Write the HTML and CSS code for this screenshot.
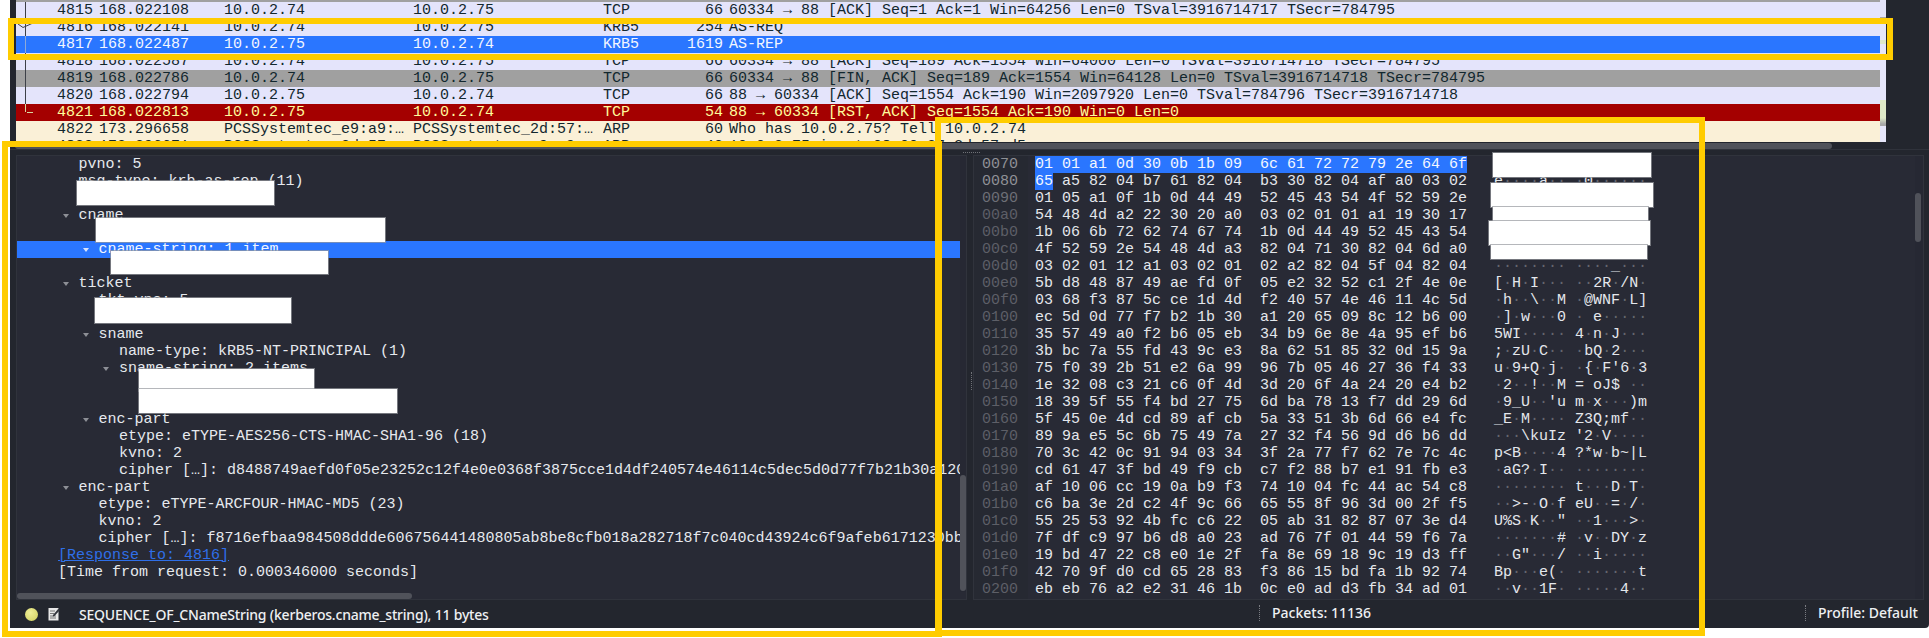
FILE: index.html
```html
<!DOCTYPE html>
<html lang="en">
<head>
<meta charset="utf-8">
<title>Wireshark</title>
<link rel="stylesheet" href="styles.css">
</head>
<body>
<div class="window">
  <div class="top">
    <div class="list">
      <div class="pkt tcp frame"><span class="no">4815</span><span class="time">168.022108</span><span class="addr">10.0.2.74</span><span class="addr2">10.0.2.75</span><span class="proto">TCP</span><span class="len">66</span><span class="info">60334 → 88 [ACK] Seq=1 Ack=1 Win=64256 Len=0 TSval=3916714717 TSecr=784795</span></div>
      <div class="pkt tcp frame"><svg class="check" width="16" height="6" viewBox="0 0 16 6"><path d="M0 1 L5 4.5 L15 0" fill="none" stroke="#3d4048" stroke-width="1"/></svg><span class="no">4816</span><span class="time">168.022141</span><span class="addr">10.0.2.74</span><span class="addr2">10.0.2.75</span><span class="proto">KRB5</span><span class="len">254</span><span class="info">AS-REQ</span></div>
      <div class="pkt sel frame"><span class="no">4817</span><span class="time">168.022487</span><span class="addr">10.0.2.75</span><span class="addr2">10.0.2.74</span><span class="proto">KRB5</span><span class="len">1619</span><span class="info">AS-REP</span></div>
      <div class="pkt tcp frame"><span class="no">4818</span><span class="time">168.022587</span><span class="addr">10.0.2.74</span><span class="addr2">10.0.2.75</span><span class="proto">TCP</span><span class="len">66</span><span class="info">60334 → 88 [ACK] Seq=189 Ack=1554 Win=64000 Len=0 TSval=3916714718 TSecr=784795</span></div>
      <div class="pkt fin frame"><span class="no">4819</span><span class="time">168.022786</span><span class="addr">10.0.2.74</span><span class="addr2">10.0.2.75</span><span class="proto">TCP</span><span class="len">66</span><span class="info">60334 → 88 [FIN, ACK] Seq=189 Ack=1554 Win=64128 Len=0 TSval=3916714718 TSecr=784795</span></div>
      <div class="pkt tcp frame"><span class="no">4820</span><span class="time">168.022794</span><span class="addr">10.0.2.75</span><span class="addr2">10.0.2.74</span><span class="proto">TCP</span><span class="len">66</span><span class="info">88 → 60334 [ACK] Seq=1554 Ack=190 Win=2097920 Len=0 TSval=784796 TSecr=3916714718</span></div>
      <div class="pkt rst frame-end"><span class="no">4821</span><span class="time">168.022813</span><span class="addr">10.0.2.75</span><span class="addr2">10.0.2.74</span><span class="proto">TCP</span><span class="len">54</span><span class="info">88 → 60334 [RST, ACK] Seq=1554 Ack=190 Win=0 Len=0</span></div>
      <div class="pkt arp"><span class="no">4822</span><span class="time">173.296658</span><span class="addr">PCSSystemtec_e9:a9:…</span><span class="addr2">PCSSystemtec_2d:57:…</span><span class="proto">ARP</span><span class="len">60</span><span class="info">Who has 10.0.2.75? Tell 10.0.2.74</span></div>
      <div class="pkt arp"><span class="no">4823</span><span class="time">173.296671</span><span class="addr">PCSSystemtec_2d:57:…</span><span class="addr2">PCSSystemtec_e9:a9:…</span><span class="proto">ARP</span><span class="len">42</span><span class="info">10.0.2.75 is at 08:00:27:2d:57:d5</span></div>
    </div>
    <div class="minimap"></div>
  </div>
  <div class="hscroll"><div class="hthumb"></div></div>
  <div class="panes">
    <div class="tree">
      <div class="treebody">
        <div class="t l1">pvno: 5</div>
        <div class="t l1">msg-type: krb-as-rep (11)</div>
        <div class="t l1">crealm: DIRECTORY.THM</div>
        <div class="t l1 open">cname</div>
        <div class="t l2">name-type: kRB5-NT-PRINCIPAL (1)</div>
        <div class="t l2 open cur">cname-string: 1 item</div>
        <div class="t l3">CNameString: larry.doe</div>
        <div class="t l1 open">ticket</div>
        <div class="t l2">tkt-vno: 5</div>
        <div class="t l2">realm: DIRECTORY.THM</div>
        <div class="t l2 open">sname</div>
        <div class="t l3">name-type: kRB5-NT-PRINCIPAL (1)</div>
        <div class="t l3 open">sname-string: 2 items</div>
        <div class="t l4">SNameString: krbtgt</div>
        <div class="t l4">SNameString: DIRECTORY.THM</div>
        <div class="t l2 open">enc-part</div>
        <div class="t l3">etype: eTYPE-AES256-CTS-HMAC-SHA1-96 (18)</div>
        <div class="t l3">kvno: 2</div>
        <div class="t l3">cipher […]: d8488749aefd0f05e23252c12f4e0e0368f3875cce1d4df240574e46114c5dec5d0d77f7b21b30a120650</div>
        <div class="t l1 open">enc-part</div>
        <div class="t l2">etype: eTYPE-ARCFOUR-HMAC-MD5 (23)</div>
        <div class="t l2">kvno: 2</div>
        <div class="t l2">cipher […]: f8716efbaa984508ddde606756441480805ab8be8cfb018a282718f7c040cd43924c6f9afeb6171230bb7f2</div>
        <div class="t l0"><span class="link">[Response to: 4816]</span></div>
        <div class="t l0">[Time from request: 0.000346000 seconds]</div>
      </div>
      <div class="vscroll tree-v"><div class="vthumb"></div></div>
      <div class="tree-h"><div class="tree-hthumb"></div></div>
    </div>
    <div class="hex">
      <div class="hr"><span class="off hi">0070</span><span class="by"><b>01 01 a1 0d 30 0b 1b 09  6c 61 72 72 79 2e 64 6f</b></span><span class="as"><i>····</i>0<i>···</i> larry.do</span></div>
      <div class="hr"><span class="off hi">0080</span><span class="by"><b>65</b> a5 82 04 b7 61 82 04  b3 30 82 04 af a0 03 02</span><span class="as">e<i>····</i>a<i>··</i> <i>·</i>0<i>······</i></span></div>
      <div class="hr"><span class="off m1">0090</span><span class="by">01 05 a1 0f 1b 0d 44 49  52 45 43 54 4f 52 59 2e</span><span class="as"><i>······</i>DI RECTORY.</span></div>
      <div class="hr"><span class="off">00a0</span><span class="by">54 48 4d a2 22 30 20 a0  03 02 01 01 a1 19 30 17</span><span class="as">THM<i>·</i>"0 <i>·</i> <i>······</i>0<i>·</i></span></div>
      <div class="hr"><span class="off">00b0</span><span class="by">1b 06 6b 72 62 74 67 74  1b 0d 44 49 52 45 43 54</span><span class="as"><i>··</i>krbtgt <i>··</i>DIRECT</span></div>
      <div class="hr"><span class="off">00c0</span><span class="by">4f 52 59 2e 54 48 4d a3  82 04 71 30 82 04 6d a0</span><span class="as">ORY.THM<i>·</i> <i>··</i>q0<i>··</i>m<i>·</i></span></div>
      <div class="hr"><span class="off">00d0</span><span class="by">03 02 01 12 a1 03 02 01  02 a2 82 04 5f 04 82 04</span><span class="as"><i>········</i> <i>····</i>_<i>···</i></span></div>
      <div class="hr"><span class="off">00e0</span><span class="by">5b d8 48 87 49 ae fd 0f  05 e2 32 52 c1 2f 4e 0e</span><span class="as">[<i>·</i>H<i>·</i>I<i>···</i> <i>··</i>2R<i>·</i>/N<i>·</i></span></div>
      <div class="hr"><span class="off">00f0</span><span class="by">03 68 f3 87 5c ce 1d 4d  f2 40 57 4e 46 11 4c 5d</span><span class="as"><i>·</i>h<i>··</i>\<i>··</i>M <i>·</i>@WNF<i>·</i>L]</span></div>
      <div class="hr"><span class="off">0100</span><span class="by">ec 5d 0d 77 f7 b2 1b 30  a1 20 65 09 8c 12 b6 00</span><span class="as"><i>·</i>]<i>·</i>w<i>···</i>0 <i>·</i> e<i>·····</i></span></div>
      <div class="hr"><span class="off">0110</span><span class="by">35 57 49 a0 f2 b6 05 eb  34 b9 6e 8e 4a 95 ef b6</span><span class="as">5WI<i>·····</i> 4<i>·</i>n<i>·</i>J<i>···</i></span></div>
      <div class="hr"><span class="off">0120</span><span class="by">3b bc 7a 55 fd 43 9c e3  8a 62 51 85 32 0d 15 9a</span><span class="as">;<i>·</i>zU<i>·</i>C<i>··</i> <i>·</i>bQ<i>·</i>2<i>···</i></span></div>
      <div class="hr"><span class="off">0130</span><span class="by">75 f0 39 2b 51 e2 6a 99  96 7b 05 46 27 36 f4 33</span><span class="as">u<i>·</i>9+Q<i>·</i>j<i>·</i> <i>·</i>{<i>·</i>F'6<i>·</i>3</span></div>
      <div class="hr"><span class="off">0140</span><span class="by">1e 32 08 c3 21 c6 0f 4d  3d 20 6f 4a 24 20 e4 b2</span><span class="as"><i>·</i>2<i>··</i>!<i>··</i>M = oJ$ <i>··</i></span></div>
      <div class="hr"><span class="off">0150</span><span class="by">18 39 5f 55 f4 bd 27 75  6d ba 78 13 f7 dd 29 6d</span><span class="as"><i>·</i>9_U<i>··</i>'u m<i>·</i>x<i>···</i>)m</span></div>
      <div class="hr"><span class="off">0160</span><span class="by">5f 45 0e 4d cd 89 af cb  5a 33 51 3b 6d 66 e4 fc</span><span class="as">_E<i>·</i>M<i>····</i> Z3Q;mf<i>··</i></span></div>
      <div class="hr"><span class="off">0170</span><span class="by">89 9a e5 5c 6b 75 49 7a  27 32 f4 56 9d d6 b6 dd</span><span class="as"><i>···</i>\kuIz '2<i>·</i>V<i>····</i></span></div>
      <div class="hr"><span class="off">0180</span><span class="by">70 3c 42 0c 91 94 03 34  3f 2a 77 f7 62 7e 7c 4c</span><span class="as">p&lt;B<i>····</i>4 ?*w<i>·</i>b~|L</span></div>
      <div class="hr"><span class="off">0190</span><span class="by">cd 61 47 3f bd 49 f9 cb  c7 f2 88 b7 e1 91 fb e3</span><span class="as"><i>·</i>aG?<i>·</i>I<i>··</i> <i>········</i></span></div>
      <div class="hr"><span class="off">01a0</span><span class="by">af 10 06 cc 19 0a b9 f3  74 10 04 fc 44 ac 54 c8</span><span class="as"><i>········</i> t<i>···</i>D<i>·</i>T<i>·</i></span></div>
      <div class="hr"><span class="off">01b0</span><span class="by">c6 ba 3e 2d c2 4f 9c 66  65 55 8f 96 3d 00 2f f5</span><span class="as"><i>··</i>&gt;-<i>·</i>O<i>·</i>f eU<i>··</i>=<i>·</i>/<i>·</i></span></div>
      <div class="hr"><span class="off">01c0</span><span class="by">55 25 53 92 4b fc c6 22  05 ab 31 82 87 07 3e d4</span><span class="as">U%S<i>·</i>K<i>··</i>" <i>··</i>1<i>···</i>&gt;<i>·</i></span></div>
      <div class="hr"><span class="off">01d0</span><span class="by">7f df c9 97 b6 d8 a0 23  ad 76 7f 01 44 59 f6 7a</span><span class="as"><i>·······</i># <i>·</i>v<i>··</i>DY<i>·</i>z</span></div>
      <div class="hr"><span class="off">01e0</span><span class="by">19 bd 47 22 c8 e0 1e 2f  fa 8e 69 18 9c 19 d3 ff</span><span class="as"><i>··</i>G"<i>···</i>/ <i>··</i>i<i>·····</i></span></div>
      <div class="hr"><span class="off">01f0</span><span class="by">42 70 9f d0 cd 65 28 83  f3 86 15 bd fa 1b 92 74</span><span class="as">Bp<i>···</i>e(<i>·</i> <i>·······</i>t</span></div>
      <div class="hr"><span class="off">0200</span><span class="by">eb eb 76 a2 e2 31 46 1b  0c e0 ad d3 fb 34 ad 01</span><span class="as"><i>··</i>v<i>··</i>1F<i>·</i> <i>·····</i>4<i>··</i></span></div>
      <div class="vscroll hex-v"><div class="vthumb hex-thumb"></div></div>
    </div>
  </div>
  <div class="status">
    <span class="led"></span>
    <svg class="note" width="12" height="14" viewBox="0 0 12 14"><rect x="0.5" y="1" width="10" height="12.5" fill="#e8e8e8"/><path d="M2 4h5M2 6.5h4M2 9h6M2 11h6" stroke="#777" stroke-width="1"/><path d="M5 8 L10.5 1.5 L12 3 L6.5 9 L4.8 9.5 Z" fill="#33363d"/></svg>
    <span class="msg">SEQUENCE_OF_CNameString (kerberos.cname_string), 11 bytes</span>
    <span class="sep packets-sep"></span>
    <span class="packets">Packets: 11136</span>
    <span class="sep profile-sep"></span>
    <span class="profile">Profile: Default</span>
  </div>
  <span class="grip grip-h"></span>
  <span class="grip grip-v"></span>
</div>

<div class="redact r1"></div>
<div class="redact r2"></div>
<div class="redact r3"></div>
<div class="redact r4"></div>
<div class="redact r5"></div>
<div class="redact r6"></div>
<div class="redact h1"></div>
<div class="redact h2"></div>
<div class="redact h3"></div>
<div class="redact h4"></div>
<div class="redact h5"></div>

<div class="mark m-row"></div>
<div class="mark m-tree"></div>
<div class="mark m-hex"></div>
</body>
</html>
```
FILE: styles.css
```css
* { box-sizing: border-box; }
html, body { margin: 0; padding: 0; background: #fff; }
body { position: relative; width: 1929px; height: 638px; overflow: hidden; font-family: "Liberation Mono", monospace; font-size: 15px; line-height: 17px; }

.window { position: absolute; left: 10px; top: 0; width: 1919px; height: 628px; background: #23262e; display: flex; flex-direction: column; overflow: hidden; border-bottom-right-radius: 4px; }

/* packet list */
.top { height: 142px; display: flex; padding-left: 6px; flex: none; }
.list { width: 1864px; height: 142px; overflow: hidden; border-top: 2px solid #a0a0a0; flex: none; }
.minimap { width: 6px; height: 142px; flex: none; background: linear-gradient(#e4e4f8 0 17px, #a8a8a8 17px 20px, #e6e6fa 20px 40px, #dfe9c8 40px 44px, #e6e6fa 44px 100px, #dfe9c8 100px 118px, #a8a8a8 124px 126px, #e6e6fa 126px); }
.pkt { position: relative; height: 17px; display: grid; grid-template-columns: 77px 131px 189px 190px 60px 60px 1fr; white-space: pre; color: #12272e; }
.pkt span { overflow: hidden; }
.no, .len { text-align: right; }
.time, .info { padding-left: 6px; }
.tcp { background: #e4e4fb; }
.sel { background: #2a76ff; color: #f3f6ff; }
.fin { background: #a0a0a0; }
.rst { background: #a40000; color: #fffc9c; }
.arp { background: #faf0d7; }
.frame::before { content: ""; position: absolute; left: 9px; top: 0; bottom: 0; width: 1px; background: #3d4048; }
.sel.frame::before { background: #8da9d8; }
.frame-end::before { content: ""; position: absolute; left: 9px; top: 0; height: 8px; width: 1px; background: #d8d8a0; }
.frame-end::after { content: ""; position: absolute; left: 11px; top: 8px; width: 6px; height: 1px; background: #d8d8a0; }
.check { position: absolute; left: 2px; top: 4px; }

.hscroll { height: 8px; flex: none; padding-left: 5px; border-bottom: 1px solid #2f323b; }
.hthumb { width: 1817px; height: 6px; margin-top: 1px; background: #50525a; border-radius: 3px; }

/* panes */
.panes { height: 450px; flex: none; display: flex; padding: 5px 5px 0 6px; gap: 6px; }
.tree { position: relative; width: 951px; height: 445px; background: #282a35; border: 1px solid #30333c; overflow: hidden; flex: none; }
.treebody { width: 943px; height: 436px; overflow: hidden; color: #e6e9ee; }
.t { position: relative; height: 17px; white-space: pre; }
.l0 { padding-left: 41px; }
.l1 { padding-left: 61.5px; }
.l2 { padding-left: 81.5px; }
.l3 { padding-left: 102px; }
.l4 { padding-left: 122px; }
.cur { background: #2a76ff; color: #f3f6ff; }
.open::before { content: ""; position: absolute; top: 7px; border-left: 3.5px solid transparent; border-right: 3.5px solid transparent; border-top: 4px solid #8d8f96; }
.l1.open::before { left: 46px; }
.l2.open::before { left: 66px; }
.l3.open::before { left: 86px; }
.cur.open::before { border-top-color: #d8e4ff; }
.link { color: #2f6fe8; text-decoration: underline; }
.tree-v { position: absolute; left: 943px; top: 0; width: 7px; height: 436px; background: #262833; }
.vthumb { width: 6px; height: 116px; margin-top: 319px; background: #50525a; border-radius: 3px; }
.tree-h { position: absolute; left: 0; top: 437px; width: 943px; height: 7px; }
.tree-hthumb { width: 395px; height: 6px; background: #50525a; border-radius: 3px; }

.hex { position: relative; width: 951px; height: 445px; background: linear-gradient(90deg, #262932 54px, #282a35 54px); border: 1px solid #30333c; color: #e4e7ec; flex: none; overflow: hidden; }
.hr { height: 17px; display: flex; margin-left: -1px; white-space: pre; }
.off { width: 54px; padding-left: 9px; color: #5d5f67; flex: none; }
.off.hi { color: #8f9196; }
.off.m1 { color: #6d6f76; }
.by { margin-left: 8px; width: 459px; flex: none; }
.by b { font-weight: normal; background: #2a76ff; color: #f3f6ff; }
.as { flex: none; }
.as i { font-style: normal; color: #64666e; }
.hex-v { position: absolute; right: 0; top: 0; width: 8px; height: 443px; background: #262833; }
.hex-thumb { height: 49px; margin-top: 37px; }

/* status */
.status { height: 28px; flex: none; position: relative; display: flex; align-items: center; padding-left: 15px; font-family: "Noto Sans", sans-serif; font-size: 14px; font-weight: 500; color: #eef0f3; white-space: pre; }
.led { width: 13px; height: 13px; border-radius: 50%; background: radial-gradient(circle at 40% 35%, #efee98, #cfcf5c); flex: none; }
.note { margin-left: 10px; flex: none; }
.msg { margin-left: 19px; letter-spacing: -0.2px; }
.sep { position: absolute; top: 5px; height: 16px; border-left: 1px dotted #7a7c82; }
.packets-sep { left: 1249px; }
.packets { position: absolute; left: 1262px; top: 4px; }
.profile-sep { left: 1795px; }
.profile { position: absolute; left: 1808px; top: 4px; }
.grip { position: absolute; }
.grip-h { left: 953px; top: 152px; width: 17px; height: 1px; border-top: 1px dotted #6f7177; }
.grip-v { left: 961px; top: 372px; width: 1px; height: 18px; border-left: 1px dotted #6f7177; }

/* redactions and annotation boxes */
.redact { position: absolute; background: #fff; box-shadow: 0 0 0 1px rgba(150,152,158,0.7); }
.r1 { left: 77px; top: 181px; width: 197px; height: 24px; }
.r2 { left: 96px; top: 218px; width: 289px; height: 24px; }
.r3 { left: 111px; top: 251px; width: 217px; height: 23px; }
.r4 { left: 95px; top: 298px; width: 196px; height: 25px; }
.r5 { left: 139px; top: 369px; width: 175px; height: 22px; }
.r6 { left: 139px; top: 389px; width: 258px; height: 24px; }
.h1 { left: 1493px; top: 153px; width: 158px; height: 24px; }
.h2 { left: 1491px; top: 183px; width: 162px; height: 24px; }
.h3 { left: 1493px; top: 207px; width: 155px; height: 14px; }
.h4 { left: 1489px; top: 221px; width: 161px; height: 24px; }
.h5 { left: 1491px; top: 245px; width: 156px; height: 14px; }
.mark { position: absolute; border: 6px solid #ffcc00; }
.m-row { left: 8px; top: 18px; width: 1885px; height: 42px; }
.m-tree { left: 2px; top: 141px; width: 940px; height: 496px; }
.m-hex { left: 935px; top: 117px; width: 770px; height: 519px; }
```
